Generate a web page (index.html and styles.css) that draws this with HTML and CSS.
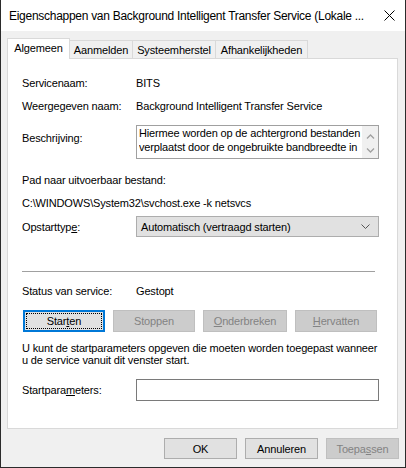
FILE: index.html
```html
<!DOCTYPE html>
<html>
<head>
<meta charset="utf-8">
<link rel="stylesheet" href="styles.css">
</head>
<body>
<div class="window">
  <div class="titlebar">
    <span class="title">Eigenschappen van Background Intelligent Transfer Service (Lokale ...</span>
    <svg class="close" width="11" height="11" viewBox="0 0 11 11"><path d="M0.5 0.5 L10.5 10.5 M10.5 0.5 L0.5 10.5" stroke="#000" stroke-width="1" fill="none"/></svg>
  </div>
  <div class="tabs">
    <div class="tab active">Algemeen</div>
    <div class="tab">Aanmelden</div>
    <div class="tab">Systeemherstel</div>
    <div class="tab">Afhankelijkheden</div>
  </div>
  <div class="panel">
    <div class="row r1"><span class="label">Servicenaam:</span><span class="value">BITS</span></div>
    <div class="row r2"><span class="label">Weergegeven naam:</span><span class="value">Background Intelligent Transfer Service</span></div>
    <div class="row r3 top">
      <span class="label desc-label">Beschrijving:</span>
      <div class="textarea">
        <div class="ta-text">Hiermee worden op de achtergrond bestanden verplaatst door de ongebruikte bandbreedte in</div>
        <div class="ta-scroll">
          <svg width="9" height="6" viewBox="0 0 9 6"><path d="M1 4.5 L4.5 1 L8 4.5" stroke="#a0a0a0" stroke-width="1.3" fill="none"/></svg>
          <svg width="9" height="6" viewBox="0 0 9 6"><path d="M1 1.5 L4.5 5 L8 1.5" stroke="#a0a0a0" stroke-width="1.3" fill="none"/></svg>
        </div>
      </div>
    </div>
    <div class="row r4"><span>Pad naar uitvoerbaar bestand:</span></div>
    <div class="row r5"><span>C:\WINDOWS\System32\svchost.exe -k netsvcs</span></div>
    <div class="row r6">
      <span class="label">Opstarttyp<u>e</u>:</span>
      <div class="combo">
        <span>Automatisch (vertraagd starten)</span>
        <svg width="9" height="6" viewBox="0 0 9 6"><path d="M0.5 0.5 L4.5 4.5 L8.5 0.5" stroke="#555" stroke-width="1" fill="none"/></svg>
      </div>
    </div>
    <div class="sep"></div>
    <div class="row r7"><span class="label">Status van service:</span><span class="value">Gestopt</span></div>
    <div class="btnrow">
      <div class="btn focus"><span class="focusrect">Star<u>t</u>en</span></div>
      <div class="btn disabled">Stoppen</div>
      <div class="btn disabled"><u>O</u>nderbreken</div>
      <div class="btn disabled"><u>H</u>ervatten</div>
    </div>
    <p class="note">U kunt de startparameters opgeven die moeten worden toegepast wanneer u de service vanuit dit venster start.</p>
    <div class="row r8">
      <span class="label">Startpara<u>m</u>eters:</span>
      <div class="input"></div>
    </div>
  </div>
  <div class="footer">
    <div class="dbtn">OK</div>
    <div class="dbtn">Annuleren</div>
    <div class="dbtn disabled">Toepa<u>s</u>sen</div>
  </div>
</div>
</body>
</html>
```

FILE: styles.css
```css
* { box-sizing: border-box; }
html, body { margin: 0; padding: 0; background: #f0f0f0; }
body {
  font-family: "Liberation Sans", Arial, sans-serif;
  font-size: 11px;
  letter-spacing: -0.15px;
  color: #000;
}
u { text-decoration: underline; text-underline-offset: 1px; }
.window {
  width: 406px;
  height: 468px;
  border: 1px solid #2b2b2b;
  border-top: none;
  background: #f0f0f0;
  display: flex;
  flex-direction: column;
}
.titlebar {
  height: 31px;
  background: #fff;
  display: flex;
  align-items: center;
  padding-left: 8px;
  padding-top: 1px;
  font-size: 12px;
  position: relative;
}
.title { letter-spacing: -0.28px; white-space: nowrap; }
.close { position: absolute; left: 383px; top: 10px; }
.tabs {
  display: flex;
  margin-top: 7px;
  padding-left: 6px;
  height: 20px;
  align-items: flex-end;
}
.tab {
  height: 18px;
  background: #f0f0f0;
  border: 1px solid #d9d9d9;
  border-bottom: none;
  margin-left: -1px;
  display: flex;
  align-items: center;
  justify-content: center;
  white-space: nowrap;
  line-height: 18px;
}
.tab:nth-child(2) { width: 64px; }
.tab:nth-child(3) { width: 84px; }
.tab:nth-child(4) { width: 93px; }
.tab.active {
  margin-left: 0;
  height: 21px;
  width: 63px;
  background: #fff;
  position: relative;
  z-index: 1;
  margin-bottom: -1px;
  padding-bottom: 2px;
}
.panel {
  margin-left: 6px;
  width: 391px;
  height: 371px;
  background: #fff;
  border: 1px solid #d9d9d9;
  padding-left: 14px;
  display: flex;
  flex-direction: column;
}
.row {
  display: flex;
  align-items: center;
  line-height: 14px;
  white-space: nowrap;
}
.row.top { align-items: flex-start; }
.label { width: 114px; flex: none; }
.r1 { margin-top: 17px; }
.r2 { margin-top: 9px; }
.r3 { margin-top: 12px; }
.desc-label { padding-top: 6px; }
.r4 { margin-top: 14px; }
.r5 { margin-top: 9px; }
.r6 { margin-top: 6px; }
.textarea {
  width: 243px;
  height: 34px;
  border: 1px solid #a0a0a0;
  display: flex;
}
.ta-text {
  flex: 1;
  margin: 1px 0 0 2px;
  height: 28px;
  line-height: 13.5px;
  overflow: hidden;
  white-space: normal;
}
.ta-scroll {
  width: 16px;
  background: #f0f0f0;
  display: flex;
  flex-direction: column;
  justify-content: space-between;
  align-items: center;
  padding: 8px 0 5px;
}
.combo {
  width: 243px;
  height: 21px;
  background: #e1e1e1;
  border: 1px solid #adadad;
  display: flex;
  align-items: center;
  justify-content: space-between;
  padding: 0 8px 0 4px;
}
.sep {
  margin-top: 34px;
  width: 353px;
  height: 1px;
  background: #a0a0a0;
}
.r7 { margin-top: 12px; }
.btnrow {
  display: flex;
  gap: 8px;
  margin-top: 12px;
  margin-left: 1px;
}
.btn {
  width: 82px;
  height: 22px;
  display: flex;
  align-items: center;
  justify-content: center;
  background: #e1e1e1;
  border: 1px solid #adadad;
}
.btnrow .btn:nth-child(3) { width: 84px; }
.btn.focus {
  border: 2px solid #0078d7;
  padding: 1px;
}
.focusrect {
  width: 100%;
  height: 100%;
  border: 1px dotted #000;
  display: flex;
  align-items: center;
  justify-content: center;
}
.disabled {
  background: #cccccc;
  border: 1px solid #bfbfbf;
  color: #838383;
}
.note {
  margin: 10px 0 0;
  width: 358px;
  line-height: 12px;
}
.r8 { margin-top: 13px; }
.input {
  width: 243px;
  height: 22px;
  border: 1px solid #7a7a7a;
  background: #fff;
}
.footer {
  display: flex;
  justify-content: flex-end;
  gap: 8px;
  margin-top: 9px;
  padding-right: 6px;
}
.dbtn {
  width: 73px;
  height: 21px;
  display: flex;
  align-items: center;
  justify-content: center;
  background: #e1e1e1;
  border: 1px solid #adadad;
}
.dbtn.disabled {
  background: #cccccc;
  border-color: #bfbfbf;
  color: #838383;
}
```
